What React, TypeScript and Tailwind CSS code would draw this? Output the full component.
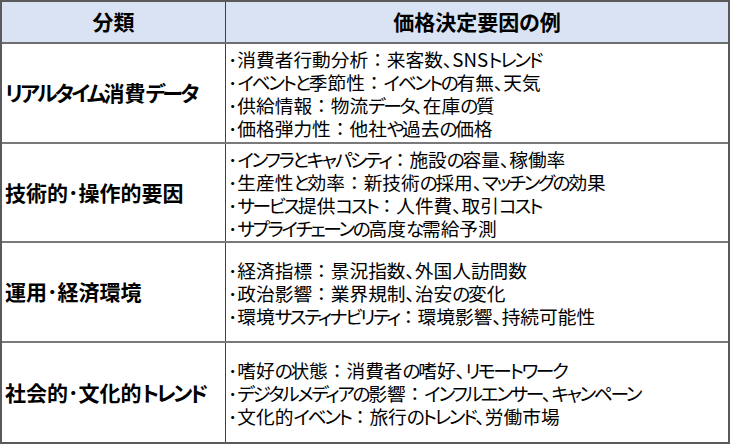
const rows = [
  {
    label: 'リアルタイム消費データ',
    h: 'h-[100px]',
    items: [
      ['消費者行動分析', '来客数、SNSトレンド'],
      ['イベントと季節性', 'イベントの有無、天気'],
      ['供給情報', '物流データ、在庫の質'],
      ['価格弾力性', '他社や過去の価格'],
    ],
  },
  {
    label: '技術的･操作的要因',
    h: 'h-[99px]',
    items: [
      ['インフラとキャパシティ', '施設の容量、稼働率'],
      ['生産性と効率', '新技術の採用、マッチングの効果'],
      ['サービス提供コスト', '人件費、取引コスト'],
      ['サプライチェーンの高度な需給予測', ''],
    ],
  },
  {
    label: '運用･経済環境',
    h: 'h-[100px]',
    items: [
      ['経済指標', '景況指数、外国人訪問数'],
      ['政治影響', '業界規制、治安の変化'],
      ['環境サスティナビリティ', '環境影響、持続可能性'],
    ],
  },
  {
    label: '社会的･文化的トレンド',
    h: 'h-[99px]',
    items: [
      ['嗜好の状態', '消費者の嗜好、リモートワーク'],
      ['デジタルメディアの影響', 'インフルエンサー、キャンペーン'],
      ['文化的イベント', '旅行のトレンド、労働市場'],
    ],
  },
];

// kana in the reference font are narrower than in Noto, so squeeze them a little
function Jp({ text, kana }: { text: string; kana: string }) {
  const parts = text.split(/([\u3040-\u30ff]+)/).filter(Boolean);
  return (
    <>
      {parts.map((p, i) =>
        /[\u3040-\u30ff]/.test(p) ? (
          <span key={i} className={kana}>
            {p}
          </span>
        ) : (
          <span key={i}>{p}</span>
        ),
      )}
    </>
  );
}

export default function App() {
  return (
    <div
      className="w-[730px] h-[444px] bg-white border-2 border-[#5a5a5a] text-black flex flex-col [font-feature-settings:'palt']"
      style={{ fontFamily: "'Noto Sans CJK JP', 'Noto Sans', sans-serif" }}
    >
      {/* Header */}
      <div className="flex h-[42px] shrink-0 bg-[#dae3f3] font-bold text-[21px] border-b-2 border-[#6e6e6e]">
        <div className="w-[224px] border-r border-[#404040] flex items-center justify-center">分類</div>
        <div className="flex-1 flex items-center justify-center">価格決定要因の例</div>
      </div>

      {rows.map((r, i) => (
        <div
          key={r.label}
          className={`flex shrink-0 ${r.h} ${i < rows.length - 1 ? 'border-b-2 border-[#7a7a7a]' : ''}`}
        >
          <div className="w-[224px] border-r border-[#404040] flex items-center pl-[3px] font-bold text-[21px] whitespace-nowrap">
            <Jp text={r.label} kana="tracking-[-2.7px]" />
          </div>
          <div className="flex-1 flex flex-col justify-center pl-[2px] text-[18.7px] leading-[23px] whitespace-nowrap">
            {r.items.map(([a, b]) => (
              <div key={a}>
                ･<Jp text={a} kana="tracking-[-2.3px]" />
                {b && <span className="[font-feature-settings:normal]">：</span>}
                <Jp text={b} kana="tracking-[-2.3px]" />
              </div>
            ))}
          </div>
        </div>
      ))}
    </div>
  );
}
